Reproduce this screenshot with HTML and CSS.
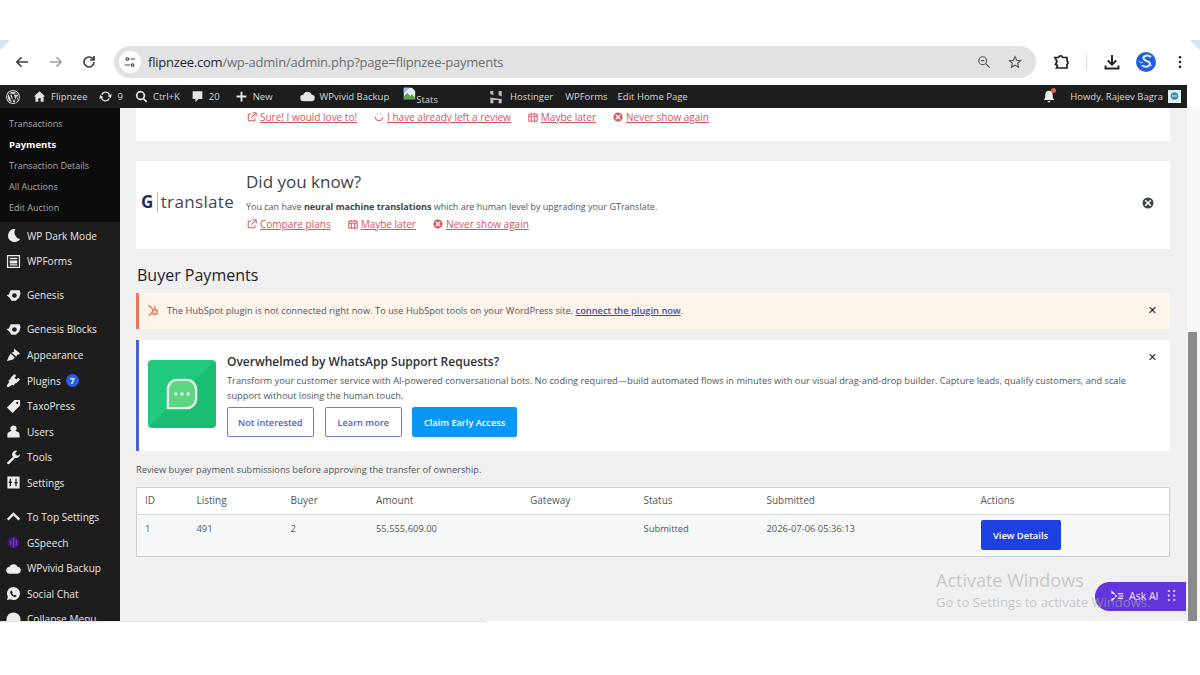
FILE: index.html
```html
<!DOCTYPE html>
<html lang="en">
  <head>
    <meta charset="UTF-8" />
    <title>Buyer Payments - Flipnzee</title>
    <link rel="stylesheet" href="styles.css">
  </head>
  <body>
    <div class="window">
      <div class="toolbar">
        <svg class="tb-icon" viewBox="0 0 16 16"><path d="M14 8H3M7.5 3.2 2.8 8l4.7 4.8" /></svg>
        <svg class="tb-icon faded" viewBox="0 0 16 16"><path d="M2 8h11M8.500 3.200 13.200 8l-4.700 4.800" /></svg>
        <svg class="tb-icon" viewBox="0 0 16 16"><path d="M13 8a5 5 0 1 1-1.500-3.600L13 6M13 2v4H9" /></svg>
        <div class="omnibox">
          <span class="site-btn">
            <svg viewBox="0 0 14 14"><circle cx="4" cy="3.500" r="1.500" /><path d="M7.500 3.500H13M1 10.500h6" /><circle cx="10" cy="10.500" r="1.500" /></svg>
          </span>
          <span class="url"><b>flipnzee.com</b>/wp-admin/admin.php?page=flipnzee-payments</span>
          <svg class="omni-icon" viewBox="0 0 16 16"><circle cx="6.500" cy="6.500" r="4.500" /><path d="M10 10l4.500 4.500M4.500 6.500h4" /></svg>
          <svg class="omni-icon" viewBox="0 0 16 16"><path d="M8 1.800 9.900 6l4.500.5-3.400 3 1 4.500L8 11.700 4 14l1-4.500-3.400-3L6.100 6z" /></svg>
        </div>
        <svg class="tb-icon ext" viewBox="0 0 18 18"><path d="M3 4.500h3.500a2.200 2.200 0 0 1 4.200 0H15v3.500a2 2 0 0 1 0 3.500V15H4.500l1-2-1-1.500-1 0L5 8.500z" /></svg>
        <span class="tb-sep"></span>
        <svg class="tb-icon dl" viewBox="0 0 18 18"><path d="M9 2v9.500M4.800 7.500 9 11.700l4.200-4.200M2.500 12.500v3h13v-3" /></svg>
        <svg class="avatar" viewBox="0 0 20 20"><circle cx="10" cy="10" r="10" fill="#1f5fdc" /><path d="M15 5c-3-2.500-8-1.500-7.500 1.500S14.500 9 14 12s-5 3.500-8 1.500" fill="none" stroke="#e8effa" stroke-width="2" /><path d="M3 9c1 2 3 2 4 1M12 15c1-1 3-1 4-2" fill="none" stroke="#9dbcf0" stroke-width="1.200" /></svg>
        <svg class="dots" viewBox="0 0 4 16"><circle cx="2" cy="2.500" r="1.500" /><circle cx="2" cy="8" r="1.500" /><circle cx="2" cy="13.500" r="1.500" /></svg>
      </div>

      <div class="adminbar">
        <svg class="ab-wp" viewBox="0 0 20 20"><circle cx="10" cy="10" r="8.700" fill="#d8d8d8" /><circle cx="10" cy="10" r="7.500" fill="#1d1d1d" /><circle cx="10" cy="10" r="6.600" fill="#d8d8d8" /><path d="M4.500 6.500h4M11.500 6.500h4M5.500 6.500 9 16l1.500-4.500L9 6.500M10 6.500 13.500 16l2-7" fill="none" stroke="#1d1d1d" stroke-width="1.500" /></svg>
        <span class="ab-item site"><svg viewBox="0 0 16 16"><path d="M8 1.500 1 8h2v6.500h3.500V10h3v4.500H13V8h2z" /></svg>Flipnzee</span>
        <span class="ab-item updates"><svg viewBox="0 0 16 16"><path d="M8 2a6 6 0 0 1 5.600 3.800L15.500 5l-.8 5-4-2.500 1.400-.8A4 4 0 0 0 4.400 6L2.500 5.200A6 6 0 0 1 8 2zM8 14a6 6 0 0 1-5.600-3.800L.5 11l.8-5 4 2.500-1.400.8a4 4 0 0 0 7.700.7l1.900.8A6 6 0 0 1 8 14z" /></svg>9</span>
        <span class="ab-item search"><svg viewBox="0 0 16 16"><path d="M6.800 1a5.800 5.800 0 0 1 4.700 9.200l3.600 3.600-1.500 1.500-3.600-3.600A5.800 5.800 0 1 1 6.800 1zm0 2.200a3.600 3.600 0 1 0 0 7.200 3.600 3.600 0 0 0 0-7.200z" /></svg>Ctrl+K</span>
        <span class="ab-item comments"><svg viewBox="0 0 16 16"><path d="M2 1.500h12v9.500H9l-3.500 4v-4H2z" /></svg>20</span>
        <span class="ab-item new"><svg viewBox="0 0 16 16"><path d="M6.800 2h2.400v4.800H14v2.400H9.200V14H6.800V9.200H2V6.800h4.800z" /></svg>New</span>
        <span class="ab-item wpvivid"><svg viewBox="0 0 16 16"><path d="M4 13a3.500 3.500 0 0 1-.5-7A4.800 4.800 0 0 1 12.500 6 3.500 3.500 0 0 1 12 13z" /></svg>WPvivid Backup</span>
        <span class="ab-item stats">
          <svg viewBox="0 0 16 16"><path d="M1 1h10l4 4v10H1z" fill="#e8edf2" /><path d="M1 12l4-5 4 4 2-2 4 4v2H1z" fill="#5ea04f" /><path d="M1 1h7L1 8z" fill="#9cc0ea" /></svg><span>Stats</span>
        </span>
        <span class="ab-item hostinger"><svg viewBox="0 0 16 16"><path d="M1.500 1h3.500v5L1.500 4.500zM11 1h3.500v6.500L11 6zM1.500 8.500 11 10h3.500v5H11v-3.500H5V15H1.500z" /></svg>Hostinger</span>
        <span class="ab-item wpforms">WPForms</span>
        <span class="ab-item">Edit Home Page</span>
        <span class="ab-right">
          <span class="bell">
            <svg viewBox="0 0 16 16"><path d="M8 1.500c3 0 4.300 2.300 4.300 5v3L14 12H2l1.700-2.500v-3c0-2.700 1.300-5 4.300-5zM6.300 13h3.400a1.700 1.700 0 0 1-3.400 0z" /></svg>
            <i></i>
          </span>
          <span class="howdy">Howdy, Rajeev Bagra</span>
          <svg class="ab-avatar" viewBox="0 0 13 13"><rect width="13" height="13" fill="#dff1f6" /><circle cx="6.500" cy="6" r="3.800" fill="#3c8f9d" /><path d="M4 6h5" stroke="#dff1f6" /></svg>
        </span>
      </div>

      <div class="admin">
        <nav class="sidebar">
          <ul class="submenu">
            <li>Transactions</li>
            <li class="current">Payments</li>
            <li>Transaction Details</li>
            <li>All Auctions</li>
            <li>Edit Auction</li>
          </ul>
          <ul class="menu">
            <li><svg viewBox="0 0 16 16"><path d="M10 1a7 7 0 1 0 5 11A7.500 7.500 0 0 1 10 1z" /></svg>WP Dark Mode</li>
            <li><svg viewBox="0 0 16 16"><path fill-rule="evenodd" d="M1 1h14v14H1zm1.300 1.300v11.400h11.400V2.300zM4 4h8v1.500H4zm0 3h8v3H4zm0 4h8v1.200H4z" /></svg>WPForms</li>
            <li class="sep"><svg viewBox="0 0 16 16"><path fill-rule="evenodd" d="M5 2.500h9.500l1 3-1.500 5-3.500 3H6L3.500 10 .5 7.500 3 7zM9 5.500a2.500 2.500 0 1 0 0 5 2.500 2.500 0 0 0 0-5z" /></svg>Genesis</li>
            <li class="sep"><svg viewBox="0 0 16 16"><path fill-rule="evenodd" d="M5 2.500h9.500l1 3-1.500 5-3.500 3H6L3.500 10 .5 7.500 3 7zM9 5.500a2.500 2.500 0 1 0 0 5 2.500 2.500 0 0 0 0-5z" /></svg>Genesis Blocks</li>
            <li><svg viewBox="0 0 16 16"><path d="M8.500 1.500 15 7l-2 1.500-1-.5-1 2.500L6 6l2.500-1zM5 7l4.500 4.500-2.500 2L1 15l2-5z" /></svg>Appearance</li>
            <li><svg viewBox="0 0 16 16"><path d="M9 1l2 2-2 2 2 2 2-2 2 2-4 4-1 0-2 2.500-1.500-1L3 15H1v-2l2.500-3.500-1-1.500L5 6V5z" /></svg>Plugins<span class="count">7</span></li>
            <li><svg viewBox="0 0 16 16"><path fill-rule="evenodd" d="M9 1h6v6l-8 8-6-6zm3 2a1.200 1.200 0 1 0 0 2.400A1.200 1.200 0 0 0 12 3z" /></svg>TaxoPress</li>
            <li><svg viewBox="0 0 16 16"><path d="M8 1.500a3.300 3.300 0 0 1 2 6c2.500.5 4.500 1.700 4.500 3.500v3.500h-13V11c0-1.800 2-3 4.500-3.500a3.300 3.300 0 0 1 2-6z" /></svg>Users</li>
            <li><svg viewBox="0 0 16 16"><path d="M15 4.500a4 4 0 0 1-5.300 3.800L4 14.500c-1 1-3 .8-2.800-1.200l6.300-6A4 4 0 0 1 12 1L9.800 3.300l.8 2 2 .7z" /></svg>Tools</li>
            <li><svg viewBox="0 0 16 16"><path fill-rule="evenodd" d="M1.500 1.500h13v13h-13zM4 4v3H3v1.500h1V12h1.300V8.500h1V7h-1V4zm6 0v3.500H9V9h1v3h1.300V9h1V7.500h-1V4z" /></svg>Settings</li>
            <li class="sep"><svg viewBox="0 0 16 16"><path d="M8 3.500l7 7-1.700 1.700L8 7 2.700 12.200 1 10.500z" /></svg>To Top Settings</li>
            <li><svg viewBox="0 0 16 16"><circle cx="8" cy="8" r="6.500" fill="#3d1a78" /><path d="M8 3v10M5 6v4M11 5v6" stroke="#7a3cc4" stroke-width="1.500" /></svg>GSpeech</li>
            <li><svg viewBox="0 0 16 16"><path d="M4 13.500a3.500 3.500 0 0 1-.5-7A4.800 4.800 0 0 1 12.500 6.500a3.500 3.500 0 0 1-.5 7z" /></svg>WPvivid Backup</li>
            <li><svg viewBox="0 0 16 16"><path fill-rule="evenodd" d="M8 1a7 7 0 1 1-3.300 13.200L1 15l1-3.500A7 7 0 0 1 8 1zM5.500 4.500 4.500 6c0 3 2.500 5.500 5.500 5.800l1.500-1.300-2-1.300-.8.700c-1-.4-1.800-1.300-2.200-2.200l.7-.8z" /></svg>Social Chat</li>
            <li><svg viewBox="0 0 16 16"><circle cx="8" cy="8" r="7.500" /></svg>Collapse Menu</li>
          </ul>
        </nav>

        <main class="content">
          <div class="notice review">
            <div class="links">
              <a><svg viewBox="0 0 12 12"><path d="M5 2.500H1.500v8h8V7M6.500 1H11v4.500M11 1 5 7" /></svg><u>Sure! I would love to!</u></a>
              <a><svg viewBox="0 0 12 12"><path d="M1.500 6a4.500 4.500 0 0 0 9 0M4 2v1M8 2v1" /></svg><u>I have already left a review</u></a>
              <a><svg viewBox="0 0 12 12"><path d="M1 2.500h10V11H1zM1 5h10M4 1v2M8 1v2M4 5v6M8 5v6" /></svg><u>Maybe later</u></a>
              <a><svg class="fill" viewBox="0 0 12 12"><path fill-rule="evenodd" d="M6 .5a5.500 5.500 0 1 1 0 11 5.500 5.500 0 0 1 0-11zM3.800 2.700 2.700 3.800 4.900 6 2.700 8.200l1.100 1.100L6 7.100l2.200 2.200 1.100-1.100L7.100 6l2.200-2.200-1.100-1.100L6 4.900z" /></svg><u>Never show again</u></a>
            </div>
          </div>

          <div class="notice gtranslate">
            <div class="gt-logo"><b>G</b><i></i>translate</div>
            <div class="gt-body">
              <h2>Did you know?</h2>
              <p>You can have <b>neural machine translations</b> which are human level by upgrading your GTranslate.</p>
              <div class="links">
                <a><svg viewBox="0 0 12 12"><path d="M5 2.500H1.500v8h8V7M6.500 1H11v4.500M11 1 5 7" /></svg><u>Compare plans</u></a>
                <a><svg viewBox="0 0 12 12"><path d="M1 2.500h10V11H1zM1 5h10M4 1v2M8 1v2M4 5v6M8 5v6" /></svg><u>Maybe later</u></a>
                <a><svg class="fill" viewBox="0 0 12 12"><path fill-rule="evenodd" d="M6 .5a5.500 5.500 0 1 1 0 11 5.500 5.500 0 0 1 0-11zM3.800 2.700 2.700 3.800 4.900 6 2.700 8.200l1.100 1.100L6 7.100l2.200 2.200 1.100-1.100L7.100 6l2.200-2.200-1.100-1.100L6 4.900z" /></svg><u>Never show again</u></a>
              </div>
            </div>
            <svg class="gt-close" viewBox="0 0 12 12"><path fill-rule="evenodd" d="M6 .5a5.500 5.500 0 1 1 0 11 5.500 5.500 0 0 1 0-11zM3.800 2.700 2.700 3.800 4.900 6 2.700 8.200l1.100 1.100L6 7.100l2.200 2.200 1.100-1.100L7.100 6l2.200-2.200-1.100-1.100L6 4.900z" /></svg>
          </div>

          <h1>Buyer Payments</h1>

          <div class="notice hubspot">
            <svg viewBox="0 0 14 14"><path d="M1.500 1.500 8 7M8.500 2v3M2 12.500 6 9" /><circle cx="8.500" cy="8.500" r="2.600" /></svg>
            <p>The HubSpot plugin is not connected right now. To use HubSpot tools on your WordPress site, <a>connect the plugin now</a>.</p>
            <span class="x">✕</span>
          </div>

          <div class="notice whatsapp">
            <div class="wa-icon">
              <svg viewBox="0 0 34 34"><path d="M12 2h10a10 10 0 0 1 10 10v10a10 10 0 0 1-10 10H2V12A10 10 0 0 1 12 2z" fill="#5fd483" stroke="#e4f8ea" stroke-width="2.500" /><circle cx="10.500" cy="17" r="1.800" fill="#e4f8ea" /><circle cx="17" cy="17" r="1.800" fill="#e4f8ea" /><circle cx="23.500" cy="17" r="1.800" fill="#e4f8ea" /></svg>
            </div>
            <div class="wa-body">
              <h3>Overwhelmed by WhatsApp Support Requests?</h3>
              <p>Transform your customer service with AI-powered conversational bots. No coding required—build automated flows in minutes with our visual drag-and-drop builder. Capture leads, qualify customers, and scale support without losing the human touch.</p>
              <div class="wa-btns">
                <a class="btn outline">Not interested</a>
                <a class="btn outline">Learn more</a>
                <a class="btn solid">Claim Early Access</a>
              </div>
            </div>
            <span class="x">✕</span>
          </div>

          <p class="intro">Review buyer payment submissions before approving the transfer of ownership.</p>

          <table class="payments">
            <colgroup>
              <col class="c-id"><col class="c-listing"><col class="c-buyer"><col class="c-amount"><col class="c-gateway"><col class="c-status"><col class="c-submitted"><col>
            </colgroup>
            <thead>
              <tr><th>ID</th><th>Listing</th><th>Buyer</th><th>Amount</th><th>Gateway</th><th>Status</th><th>Submitted</th><th>Actions</th></tr>
            </thead>
            <tbody>
              <tr><td>1</td><td>491</td><td>2</td><td>55,555,609.00</td><td></td><td>Submitted</td><td>2026-07-06 05:36:13</td><td><a class="view-btn">View Details</a></td></tr>
            </tbody>
          </table>
        </main>

        <div class="ask-ai">
          <svg viewBox="0 0 16 16"><path d="M1.500 1.500 7 6.500 1.500 5zM1.500 14.500 7 9.500 1.500 11zM5 8l2-1.500L8 8 7 9.500zM9 4.500h6v1.500H9zM10 7.300h5.500v1.400H10zM9 10h6v1.500H9z" /></svg>
          <span>Ask AI</span>
          <svg class="grip" viewBox="0 0 10 14"><circle cx="2" cy="2" r="1.200" /><circle cx="8" cy="2" r="1.200" /><circle cx="2" cy="7" r="1.200" /><circle cx="8" cy="7" r="1.200" /><circle cx="2" cy="12" r="1.200" /><circle cx="8" cy="12" r="1.200" /></svg>
        </div>
        <div class="activate">
          <div class="a-title">Activate Windows</div>
          <div class="a-sub">Go to Settings to activate Windows.</div>
        </div>
        <div class="scrollbar"><span class="arrow"></span><span class="thumb"></span></div>
      </div>
      <div class="hscroll"></div>
    </div>
  </body>
</html>
```

FILE: styles.css
```css
* {
  margin: 0;
  padding: 0;
  box-sizing: border-box;
}

body {
  background: #fff;
  font-family: "Open Sans", "Noto Sans", sans-serif;
  color: #50575e;
  overflow: hidden;
}

.window {
  padding-top: 40px;
  height: 675px;
  display: flex;
  flex-direction: column;
}

/* browser toolbar */
.toolbar {
  position: relative;
  height: 45px;
  display: flex;
  align-items: center;
  padding: 0 14px 2px 14px;
  background: #fff;
}

/* bits of the tab strip left in the corners */
.toolbar::before,
.toolbar::after {
  content: "";
  position: absolute;
  top: 0;
  width: 11px;
  height: 11px;
}

.toolbar::before {
  left: 0;
  background: linear-gradient(135deg, #cfe6f2 45%, transparent 50%);
}

.toolbar::after {
  right: 0;
  background: linear-gradient(225deg, #cfe6f2 45%, transparent 50%);
}

.tb-icon {
  width: 16px;
  height: 16px;
  fill: none;
  stroke: #3c4043;
  stroke-width: 1.600;
  margin-right: 17.500px;
  flex: none;
}

.tb-icon.faded {
  stroke: #9aa0a6;
}

.omnibox {
  flex: none;
  width: 922px;
  height: 32px;
  margin-left: -.5px;
  border-radius: 16px;
  background: #e2e2e2;
  display: flex;
  align-items: center;
  padding: 0 14px 0 5px;
}

.site-btn {
  width: 22px;
  height: 22px;
  border-radius: 50%;
  background: #fff;
  display: flex;
  align-items: center;
  justify-content: center;
}

.site-btn svg {
  width: 12px;
  height: 12px;
  fill: none;
  stroke: #3c4043;
  stroke-width: 1.300;
}

.url {
  flex: 1;
  margin-left: 7px;
  font-size: 13px;
  letter-spacing: -.22px;
  color: #6a6d70;
}

.url b {
  font-weight: 400;
  color: #26282b;
}

.omni-icon {
  width: 14px;
  height: 14px;
  fill: none;
  stroke: #55585b;
  stroke-width: 1.300;
  margin-left: 17px;
}

.tb-icon.ext {
  width: 18px;
  height: 18px;
  margin: 0 0 0 16px;
  stroke-width: 1.700;
  stroke: #202124;
}

.tb-sep {
  width: 1px;
  height: 17px;
  background: #cfe3ec;
  margin: 0 16px;
}

.tb-icon.dl {
  width: 18px;
  height: 18px;
  margin: 0;
  stroke-width: 1.900;
  stroke: #202124;
}

.avatar {
  width: 20px;
  height: 20px;
  margin-left: 15px;
}

.dots {
  width: 4px;
  height: 14px;
  margin-left: 22px;
  fill: #202124;
}

/* wp admin bar */
.adminbar {
  height: 23px;
  background: #1d1d1d;
  color: #d6d6d6;
  font-size: 9.500px;
  display: flex;
  align-items: center;
  padding-left: 5px;
  margin-right: 13px;
  flex: none;
}

.ab-wp {
  width: 16px;
  height: 16px;
  margin-right: 12px;
}

.ab-item {
  display: flex;
  align-items: center;
  white-space: nowrap;
}

.ab-item svg {
  width: 13px;
  height: 13px;
  fill: #e4e4e4;
  margin-right: 5px;
}

.site { margin-right: 12px; }
.updates { margin-right: 12px; }
.search { margin-right: 11px; }
.comments { margin-right: 15px; }
.new { margin-right: 27px; }
.wpvivid svg { width: 15px; height: 15px; margin-right: 5px; }
.wpvivid { margin-right: 14px; }

.stats {
  margin-right: 51px;
}

.stats svg {
  width: 13px;
  height: 13px;
  margin: -6px 0 0 0;
}

.stats span {
  margin-top: 5px;
}

.hostinger { margin-right: 12px; }
.hostinger svg { fill: #bdbdbd; width: 14px; height: 14px; margin-right: 7px; }
.wpforms { margin-right: 10px; }

.ab-right {
  margin-left: auto;
  display: flex;
  align-items: center;
  padding-right: 6px;
}

.bell {
  position: relative;
  width: 14px;
  height: 15px;
  margin-right: 14px;
}

.bell svg {
  width: 14px;
  height: 15px;
  fill: #eee;
}

.bell i {
  position: absolute;
  top: -1px;
  right: 0;
  width: 5px;
  height: 5px;
  border-radius: 50%;
  background: #d9604c;
}

.ab-avatar {
  width: 13px;
  height: 13px;
  margin-left: 5px;
}

/* main area */
.admin {
  position: relative;
  display: flex;
  height: 513px;
  flex: none;
  overflow: hidden;
}

.sidebar {
  width: 120px;
  flex: none;
  background: #1d1d1d;
  color: #e6e6e6;
  overflow: hidden;
}

.sidebar ul {
  list-style: none;
}

.submenu {
  background: #0c0c0c;
  height: 114px;
  padding: 5px 0 0 9px;
  font-size: 9px;
  color: #a8a8a8;
}

.submenu li {
  height: 21px;
  line-height: 21px;
}

.submenu .current {
  color: #fff;
  font-size: 9.500px;
  font-weight: 700;
}

.menu {
  font-size: 10.100px;
}

.menu li {
  height: 25.600px;
  display: flex;
  align-items: center;
  padding-left: 6px;
  white-space: nowrap;
}

.menu li:first-child {
  margin-top: 1px;
}

.menu .sep {
  margin-top: 8.400px;
}

.menu svg {
  width: 15px;
  height: 15px;
  fill: #ececec;
  margin-right: 6px;
  flex: none;
}

.count {
  width: 13px;
  height: 13px;
  border-radius: 50%;
  background: #2a5fe0;
  color: #fff;
  font-size: 8px;
  font-weight: 700;
  text-align: center;
  line-height: 13px;
  margin-left: 5px;
}

.content {
  flex: 1;
  background: #f0f0f1;
  padding-left: 16px;
  padding-right: 30px;
  font-size: 9.250px;
}

.notice {
  background: #fff;
}

.links {
  display: flex;
  color: #d9535f;
  font-size: 10px;
}

.links a {
  display: flex;
  align-items: center;
  margin-right: 17px;
}

.links svg {
  width: 10px;
  height: 10px;
  fill: none;
  stroke: #d9535f;
  stroke-width: 1.200;
  margin-right: 3px;
}

.links svg.fill {
  fill: #d9535f;
  stroke: none;
}

.review {
  height: 33px;
  padding: 2px 0 0 111px;
}

.gtranslate {
  height: 88px;
  margin-top: 20px;
  display: flex;
  align-items: flex-start;
  padding-top: 9px;
  position: relative;
}

.gt-logo {
  width: 110px;
  margin-top: 20px;
  padding-left: 5px;
  font-size: 17px;
  line-height: 23px;
  color: #3c4658;
  display: flex;
  align-items: center;
  letter-spacing: .35px;
}

.gt-logo b {
  color: #26305c;
  font-size: 17px;
}

.gt-logo i {
  width: 1px;
  height: 20px;
  background: #e0b45c;
  margin: 0 3px;
}

.gt-body h2 {
  font-size: 17px;
  font-weight: 400;
  color: #3c434a;
  line-height: 23px;
}

.gt-body p {
  font-size: 9px;
  margin-top: 7px;
  line-height: 13px;
}

.gt-body b {
  color: #3c434a;
}

.gt-body .links {
  margin-top: 4px;
  margin-left: 1px;
}

.gt-close {
  position: absolute;
  right: 16px;
  top: 36px;
  width: 12px;
  height: 12px;
  fill: #3c434a;
}

h1 {
  font-size: 16px;
  font-weight: 400;
  color: #1d2327;
  line-height: 22px;
  margin-top: 15px;
  padding-left: 1px;
}

.hubspot {
  height: 36px;
  margin-top: 7px;
  background: #fdf4ea;
  border-left: 3px solid #e8785f;
  display: flex;
  align-items: center;
  padding: 0 0 2px 8px;
  position: relative;
}

.hubspot svg {
  width: 13px;
  height: 13px;
  fill: none;
  stroke: #ee7a54;
  stroke-width: 1.500;
  margin-right: 7px;
}

.hubspot p {
  font-size: 9.300px;
}

.hubspot a {
  color: #3b4bc0;
  font-weight: 600;
  text-decoration: underline;
}

.x {
  position: absolute;
  right: 13px;
  top: 10px;
  font-size: 11px;
  line-height: 15px;
  font-weight: 700;
  color: #1d2327;
  font-family: "DejaVu Sans", sans-serif;
}

.whatsapp {
  height: 111px;
  margin-top: 11px;
  border-left: 3px solid #4a5fd0;
  display: flex;
  align-items: flex-start;
  padding: 20px 0 0 9px;
  position: relative;
}

.wa-icon {
  width: 68px;
  height: 68px;
  border-radius: 4px;
  background: linear-gradient(135deg, #21c97c 50%, #1bbd72 50%);
  display: flex;
  align-items: center;
  justify-content: center;
  flex: none;
}

.wa-icon svg {
  width: 32px;
  height: 34px;
}

.wa-body {
  margin-left: 11px;
  margin-top: -7px;
}

.wa-body h3 {
  font-size: 12px;
  font-weight: 600;
  color: #2c3338;
  line-height: 17px;
}

.wa-body p {
  line-height: 15px;
  margin-top: 3px;
  max-width: 905px;
}

.wa-btns {
  display: flex;
  gap: 10px;
  margin-top: 4px;
}

.btn {
  height: 30px;
  line-height: 29px;
  padding: 0 12px;
  border-radius: 2px;
  font-weight: 600;
  font-size: 9.200px;
}

.btn.outline {
  border: 1px solid #6e7bc9;
  color: #4a5fd0;
}

.btn.outline:first-child {
  padding: 0 10px;
  margin-right: 1px;
}

.btn.solid {
  background: #0a96f5;
  color: #fff;
  line-height: 31px;
}

.intro {
  margin-top: 12px;
  line-height: 13px;
}

.payments {
  width: 100%;
  margin-top: 11px;
  table-layout: fixed;
  border-collapse: collapse;
  border: 1px solid #cfd2d5;
  font-size: 9.400px;
}

.c-id { width: 52px; }
.c-listing { width: 94px; }
.c-buyer { width: 85.500px; }
.c-amount { width: 154px; }
.c-gateway { width: 113.500px; }
.c-status { width: 123px; }
.c-submitted { width: 214px; }

.payments th {
  height: 27px;
  background: #fff;
  font-weight: 400;
  text-align: left;
  padding: 0 0 2px 8px;
  font-size: 10px;
  border-bottom: 1px solid #d8dadc;
}

.payments td {
  height: 42px;
  background: #f6f7f7;
  padding: 5px 0 0 8px;
  vertical-align: top;
  line-height: 17px;
}

.view-btn {
  display: block;
  width: 80px;
  height: 30px;
  line-height: 31px;
  border-radius: 2px;
  background: #1d40e0;
  color: #fff;
  font-weight: 600;
  text-align: center;
}

.activate {
  position: absolute;
  left: 936px;
  top: 461px;
  color: rgba(170, 170, 172, .6);
  white-space: nowrap;
}

.a-title {
  font-size: 18px;
  line-height: 22px;
}

.a-sub {
  font-size: 13.100px;
  line-height: 23px;
}

.ask-ai {
  position: absolute;
  left: 1095px;
  top: 474px;
  width: 91px;
  height: 29px;
  border-radius: 15px 0 0 15px;
  background: #6236dc;
  color: #f1ecff;
  font-size: 10.500px;
  display: flex;
  align-items: center;
  padding: 0 0 2px 15px;
}

.ask-ai svg {
  width: 14px;
  height: 14px;
  fill: #f1ecff;
  margin-right: 5px;
}

.ask-ai .grip {
  width: 9px;
  height: 13px;
  margin: 0 0 0 9px;
}

.scrollbar {
  position: absolute;
  right: 0;
  top: -23px;
  width: 13px;
  height: 536px;
  background: #f8f8f8;
}

.arrow {
  position: absolute;
  left: 3px;
  top: 6px;
  border: 4px solid transparent;
  border-top: 0;
  border-bottom: 4px solid #a0a0a0;
}

.thumb {
  position: absolute;
  left: 1px;
  top: 247px;
  width: 9px;
  height: 289px;
  background: #8a8a8a;
}

.hscroll {
  width: 486px;
  height: 1px;
  background: #dde3e8;
}
```
